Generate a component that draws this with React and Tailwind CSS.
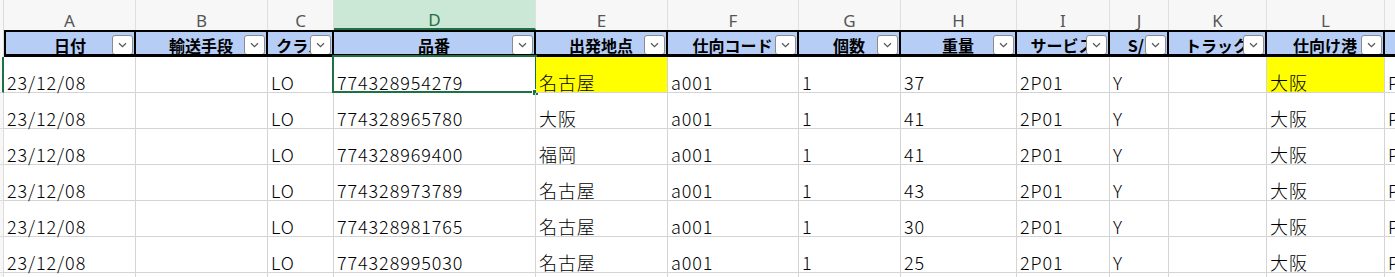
import React from 'react';

const COLS = [
  { key: 'A', w: 'w-[132px]', label: '日付' },
  { key: 'B', w: 'w-[132px]', label: '輸送手段' },
  { key: 'C', w: 'w-[66px]', label: 'クラス' },
  { key: 'D', w: 'w-[202px]', label: '品番' },
  { key: 'E', w: 'w-[132px]', label: '出発地点' },
  { key: 'F', w: 'w-[131px]', label: '仕向コード' },
  { key: 'G', w: 'w-[102px]', label: '個数' },
  { key: 'H', w: 'w-[116px]', label: '重量' },
  { key: 'I', w: 'w-[93px]', label: 'サービス' },
  { key: 'J', w: 'w-[59px]', label: 'S/I' },
  { key: 'K', w: 'w-[98px]', label: 'トラック' },
  { key: 'L', w: 'w-[118px]', label: '仕向け港' },
  { key: 'M', w: 'w-[120px]', label: '' },
];

const ROWS = [
  ['23/12/08', '', 'LO', '774328954279', '名古屋', 'a001', '1', '37', '2P01', 'Y', '', '大阪', 'P'],
  ['23/12/08', '', 'LO', '774328965780', '大阪', 'a001', '1', '41', '2P01', 'Y', '', '大阪', 'P'],
  ['23/12/08', '', 'LO', '774328969400', '福岡', 'a001', '1', '41', '2P01', 'Y', '', '大阪', 'P'],
  ['23/12/08', '', 'LO', '774328973789', '名古屋', 'a001', '1', '43', '2P01', 'Y', '', '大阪', 'P'],
  ['23/12/08', '', 'LO', '774328981765', '名古屋', 'a001', '1', '30', '2P01', 'Y', '', '大阪', 'P'],
  ['23/12/08', '', 'LO', '774328995030', '名古屋', 'a001', '1', '25', '2P01', 'Y', '', '大阪', 'P'],
  ['', '', '', '', '', '', '', '', '', '', '', '', ''],
];

const jp = { fontFamily: '"Noto Sans CJK JP", "Noto Sans", sans-serif' };

function FilterButton() {
  return (
    <div className="absolute right-[1px] top-[3px] w-[21px] h-[20px] bg-white border border-[#8c8c8c] rounded-[3px] flex items-center justify-center">
      <svg width="9" height="6" viewBox="0 0 9 6">
        <path d="M1 1.2 L4.5 4.6 L8 1.2" fill="none" stroke="#555" strokeWidth="1.2" />
      </svg>
    </div>
  );
}

export default function App() {
  return (
    <div className="w-[1395px] h-[277px] overflow-hidden bg-white select-none" style={jp}>
      {/* column letters */}
      <div className="flex h-[30px] bg-[#f7f7f7]">
        <div className="w-[4px] shrink-0 border-r border-[#dcdcdc]" />
        {COLS.map((c) => (
          <div
            key={c.key}
            className={`${c.w} shrink-0 border-r border-[#e0e0e0] flex items-center justify-center pt-[10px] text-[17px] leading-none ${
              c.key === 'D' ? 'bg-[#cae8d5] text-[#1e7145] border-b-2 border-b-[#1e7145]' : 'text-[#555]'
            }`}
            style={{ fontFamily: '"Noto Sans", sans-serif' }}
          >
            {c.key}
          </div>
        ))}
      </div>

      {/* table header */}
      <div className="flex h-[27px]">
        <div className="w-[4px] shrink-0 bg-[#f7f7f7] border-r border-[#dcdcdc]" />
        {COLS.map((c, i) => (
          <div
            key={c.key}
            className={`${c.w} shrink-0 relative overflow-hidden bg-[#b6cdf5] border-t-2 border-b-[3px] border-r-2 border-black ${
              i === 0 ? 'border-l-2' : ''
            } flex items-center justify-center pt-[3px]`}
          >
            <span className="whitespace-nowrap text-[16px] font-bold text-black leading-none">{c.label}</span>
            {c.key !== 'M' && <FilterButton />}
          </div>
        ))}
      </div>

      {/* data rows */}
      {ROWS.map((row, r) => (
        <div key={r} className="flex h-[36px]">
          <div
            className={`w-[4px] shrink-0 bg-[#f7f7f7] border-b border-[#dcdcdc] ${
              r === 0 ? 'border-r-2 border-r-[#1e7145]' : 'border-r border-r-[#dcdcdc]'
            }`}
          />
          {COLS.map((c, i) => {
            const yellow = r === 0 && (c.key === 'E' || c.key === 'L');
            const selected = r === 0 && c.key === 'D';
            return (
              <div
                key={c.key}
                className={`${c.w} shrink-0 relative border-r border-b border-[#d4d4d4] flex items-end pl-[3px] pb-[1px] ${
                  yellow ? 'bg-[#ffff00]' : ''
                }`}
              >
                <span className="whitespace-nowrap text-[18px] leading-none font-light text-black tracking-[0.9px]">
                  {row[i]}
                </span>
                {selected && (
                  <>
                    <div className="absolute left-[-2px] top-[-2px] right-[-2px] bottom-[-1px] border-2 border-[#1e7145]" />
                    <div className="absolute right-[-4px] bottom-[-4px] w-[7px] h-[7px] bg-[#1e7145] border border-white" />
                  </>
                )}
              </div>
            );
          })}
        </div>
      ))}
    </div>
  );
}
